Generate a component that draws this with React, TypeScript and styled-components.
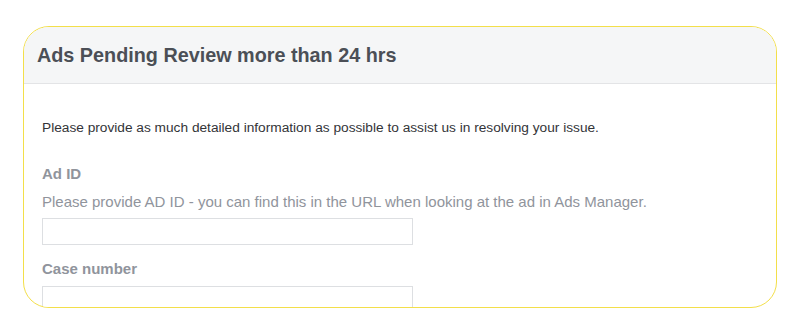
import React from "react";
import styled, { createGlobalStyle } from "styled-components";

const Global = createGlobalStyle`
  html, body { margin: 0; padding: 0; background: #ffffff; }
  body { font-family: "Liberation Sans", Arial, Helvetica, sans-serif; }
`;

const Page = styled.div`
  width: 800px;
  height: 333px;
  padding: 26px 23px 0 23px;
  box-sizing: border-box;
`;

const Card = styled.div`
  height: 282px;
  border: 1.5px solid #f3df4a;
  border-radius: 26px;
  overflow: hidden;
  background: #ffffff;
  box-sizing: border-box;
`;

const Header = styled.div`
  height: 57px;
  background: #f5f6f7;
  border-bottom: 1px solid #e3e4e6;
  display: flex;
  align-items: center;
  padding: 0 13px;
  box-sizing: border-box;
`;

const Title = styled.h1`
  margin: 0;
  font-size: 19.8px;
  font-weight: bold;
  color: #4b4f56;
  padding-top: 1px;
`;

const Body = styled.div`
  padding: 35px 18px 0 18px;
  display: flex;
  flex-direction: column;
`;

const Intro = styled.p`
  margin: 0 0 28px 0;
  font-size: 13.7px;
  color: #333438;
  line-height: 18px;
`;

const Field = styled.div`
  display: flex;
  flex-direction: column;
  margin-bottom: 15px;
`;

const Label = styled.label`
  font-size: 15px;
  font-weight: bold;
  color: #90949c;
  line-height: 18px;
`;

const Help = styled.div`
  font-size: 15px;
  color: #90949c;
  line-height: 18px;
  margin-top: 10px;
`;

const Input = styled.input<{ $gap: number }>`
  width: 371px;
  height: 27px;
  box-sizing: border-box;
  border: 1px solid #dddfe2;
  margin-top: ${(p) => p.$gap}px;
  padding: 0 6px;
  font-family: inherit;
  outline: none;
`;

export default function App() {
  return (
    <>
      <Global />
      <Page>
        <Card>
          <Header>
            <Title>Ads Pending Review more than 24 hrs</Title>
          </Header>
          <Body>
            <Intro>
              Please provide as much detailed information as possible to assist us in resolving your issue.
            </Intro>
            <Field>
              <Label>Ad ID</Label>
              <Help>
                Please provide AD ID - you can find this in the URL when looking at the ad in Ads Manager.
              </Help>
              <Input $gap={7} />
            </Field>
            <Field>
              <Label>Case number</Label>
              <Input $gap={8} />
            </Field>
          </Body>
        </Card>
      </Page>
    </>
  );
}
